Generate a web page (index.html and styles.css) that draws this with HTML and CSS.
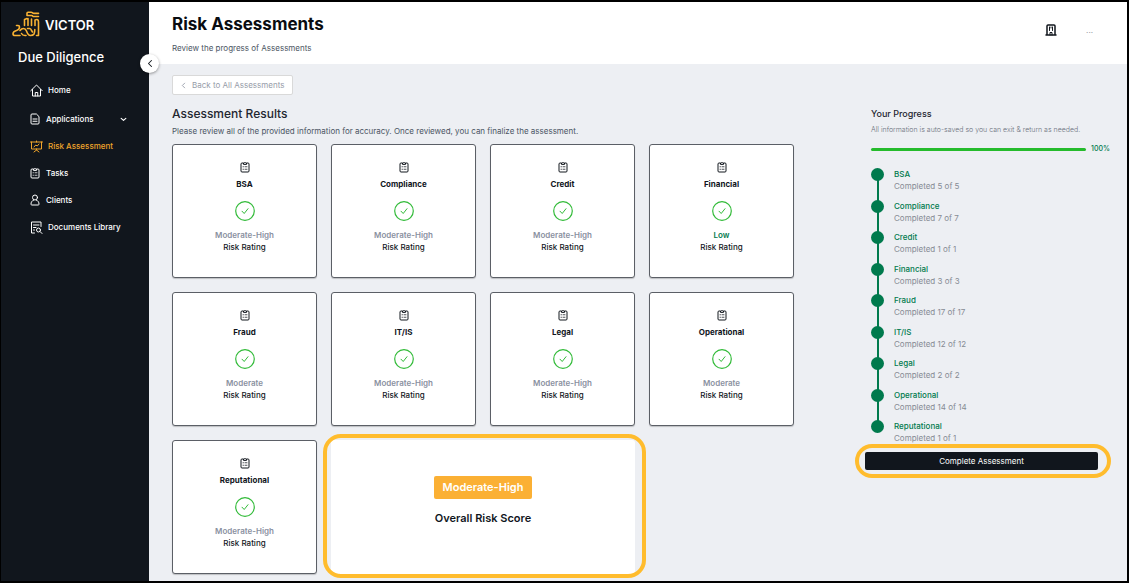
FILE: index.html
```html
<!DOCTYPE html>
<html lang="en">
<head>
<meta charset="utf-8">
<title>Risk Assessments</title>
<link rel="stylesheet" href="styles.css">
</head>
<body>
<svg class="sprite" aria-hidden="true">
  <symbol id="clipboard" viewBox="0 0 20 24"><path d="M6 4H4a2 2 0 0 0-2 2v14a2 2 0 0 0 2 2h12a2 2 0 0 0 2-2V6a2 2 0 0 0-2-2h-2"/><path d="M7 6V4h1.500a1.600 1.600 0 0 1 3 0H13v2z"/><path stroke-width="1.500" d="M6 11.500h1M10 11.500h4M6 16.500h1M10 16.500h4"/></symbol>
  <symbol id="check" viewBox="0 0 20 20"><circle cx="10" cy="10" r="9.300"/><path stroke-width="1" d="M7 10.200l2.200 2.300 3.800-4.800"/></symbol>
  <symbol id="left" viewBox="0 0 8 12"><path d="M6 2L2 6l4 4"/></symbol>
</svg>
<div class="app">
  <aside class="sidebar">
    <div class="brand">
      <svg class="brand-mark" viewBox="0 0 28 26" aria-hidden="true">
        <path d="M15 4.500V2.200q0-1 1-1h3q1 0 1.500.6t1.500.6h4.500M15 4.500h4.500q1 0 1.500 1h5.500M12.500 8.500v6M16 7.500v7M19.500 8v6.500M23 9v5.500M12.500 8.500L15 7.500M23 9q3.500-1.500 3.500 2v13.500h-2M4.500 14.500h1.500q1.500 0 1.500 1.500 0 2.500-3 3.500-3.500 1-3.500 3.200 0 1.800 2 1.800h5M8 19.500q1.500-2 3.500-2t3 2.500q1.500 4.500 4 4.500t3.500-1.500q.8-1.500.8-4.500M9.500 22.500q1 2 3.500 2h1M15.500 17.500h2q1.500 0 2 2l1 1.500"/>
      </svg>
      <span class="brand-name">VICTOR</span>
    </div>
    <h2 class="product">Due Diligence</h2>
    <nav class="nav">
      <a class="nav-item nav-home" href="#"><svg class="icon wide" viewBox="0 0 26 26"><path d="M1.500 13.500L13 2l11.500 11.500M5 11v13h16V11M10.500 24v-7h5v7"/></svg>Home</a>
      <a class="nav-item" href="#"><svg class="icon" viewBox="0 0 20 24"><path d="M12 2H4a2 2 0 0 0-2 2v16a2 2 0 0 0 2 2h12a2 2 0 0 0 2-2V8zM6 12h8M6 16.500h8"/></svg>Applications<svg class="caret" viewBox="0 0 12 8"><path d="M2 2l4 3.500L10 2"/></svg></a>
      <a class="nav-item active" href="#"><svg class="icon wide" viewBox="0 0 26 24"><path d="M1 3h24M3 3v14h20V3M13 1v2M13 17v2M8 23l5-4 5 4M8 13l3.500-4 3 2L18 7"/></svg>Risk Assessment</a>
      <a class="nav-item" href="#"><svg class="icon"><use href="#clipboard"/></svg>Tasks</a>
      <a class="nav-item" href="#"><svg class="icon" viewBox="0 0 20 24"><circle cx="10" cy="7" r="5"/><path d="M7 12.500c-3.500 1-5 4-5 8 0 1 .5 1.500 1.500 1.500h13c1 0 1.500-.5 1.500-1.500 0-4-1.500-7-5-8"/></svg>Clients</a>
      <a class="nav-item" href="#"><svg class="icon wide" viewBox="0 0 26 26"><path d="M9 24H3V2h19v9M7 8h11M7 13h5M7 18h2"/><circle cx="17" cy="18" r="4"/><path d="M20 21l4 4"/></svg>Documents Library</a>
    </nav>
    <button class="collapse" type="button" aria-label="Collapse menu"><svg class="collapse-icon"><use href="#left"/></svg></button>
  </aside>

  <div class="page">
    <header class="topbar">
      <div>
        <h1 class="title">Risk Assessments</h1>
        <p class="subtitle">Review the progress of Assessments</p>
      </div>
      <div class="tools">
        <button class="tool" type="button" aria-label="Organization"><svg class="building" viewBox="0 0 12 12"><path d="M2 11V2q0-1 1-1h6q1 0 1 1v9M1 11h10"/><path stroke-width="1" d="M4.500 3v3.500M7.500 3v3.500M6 3v1M5 11V8.500h2V11"/></svg></button>
        <button class="tool more" type="button" aria-label="More">...</button>
      </div>
    </header>

    <div class="content">
      <main class="results">
        <button class="back" type="button"><svg class="back-icon"><use href="#left"/></svg>Back to All Assessments</button>
        <h2 class="heading">Assessment Results</h2>
        <p class="lead">Please review all of the provided information for accuracy. Once reviewed, you can finalize the assessment.</p>
        <div class="cards">
          <section class="card"><svg class="card-icon"><use href="#clipboard"/></svg><h3 class="card-title">BSA</h3><svg class="card-check"><use href="#check"/></svg><p class="rating">Moderate-High</p><p class="caption">Risk Rating</p></section>
          <section class="card"><svg class="card-icon"><use href="#clipboard"/></svg><h3 class="card-title">Compliance</h3><svg class="card-check"><use href="#check"/></svg><p class="rating">Moderate-High</p><p class="caption">Risk Rating</p></section>
          <section class="card"><svg class="card-icon"><use href="#clipboard"/></svg><h3 class="card-title">Credit</h3><svg class="card-check"><use href="#check"/></svg><p class="rating">Moderate-High</p><p class="caption">Risk Rating</p></section>
          <section class="card"><svg class="card-icon"><use href="#clipboard"/></svg><h3 class="card-title">Financial</h3><svg class="card-check"><use href="#check"/></svg><p class="rating low">Low</p><p class="caption">Risk Rating</p></section>
          <section class="card"><svg class="card-icon"><use href="#clipboard"/></svg><h3 class="card-title">Fraud</h3><svg class="card-check"><use href="#check"/></svg><p class="rating">Moderate</p><p class="caption">Risk Rating</p></section>
          <section class="card"><svg class="card-icon"><use href="#clipboard"/></svg><h3 class="card-title">IT/IS</h3><svg class="card-check"><use href="#check"/></svg><p class="rating">Moderate-High</p><p class="caption">Risk Rating</p></section>
          <section class="card"><svg class="card-icon"><use href="#clipboard"/></svg><h3 class="card-title">Legal</h3><svg class="card-check"><use href="#check"/></svg><p class="rating">Moderate-High</p><p class="caption">Risk Rating</p></section>
          <section class="card"><svg class="card-icon"><use href="#clipboard"/></svg><h3 class="card-title">Operational</h3><svg class="card-check"><use href="#check"/></svg><p class="rating">Moderate</p><p class="caption">Risk Rating</p></section>
          <section class="card"><svg class="card-icon"><use href="#clipboard"/></svg><h3 class="card-title">Reputational</h3><svg class="card-check"><use href="#check"/></svg><p class="rating">Moderate-High</p><p class="caption">Risk Rating</p></section>
          <section class="overall"><p class="badge">Moderate-High</p><h3 class="overall-title">Overall Risk Score</h3></section>
        </div>
      </main>

      <aside class="progress">
        <h2 class="progress-title">Your Progress</h2>
        <p class="progress-note">All information is auto-saved so you can exit &amp; return as needed.</p>
        <div class="meter"><div class="track"></div><span class="percent">100%</span></div>
        <ol class="steps">
          <li class="step"><strong class="step-name">BSA</strong><span class="step-count">Completed 5 of 5</span></li>
          <li class="step"><strong class="step-name">Compliance</strong><span class="step-count">Completed 7 of 7</span></li>
          <li class="step"><strong class="step-name">Credit</strong><span class="step-count">Completed 1 of 1</span></li>
          <li class="step"><strong class="step-name">Financial</strong><span class="step-count">Completed 3 of 3</span></li>
          <li class="step"><strong class="step-name">Fraud</strong><span class="step-count">Completed 17 of 17</span></li>
          <li class="step"><strong class="step-name">IT/IS</strong><span class="step-count">Completed 12 of 12</span></li>
          <li class="step"><strong class="step-name">Legal</strong><span class="step-count">Completed 2 of 2</span></li>
          <li class="step"><strong class="step-name">Operational</strong><span class="step-count">Completed 14 of 14</span></li>
          <li class="step"><strong class="step-name">Reputational</strong><span class="step-count">Completed 1 of 1</span></li>
        </ol>
        <div class="finish"><button class="complete" type="button">Complete Assessment</button></div>
      </aside>
    </div>
  </div>
</div>
</body>
</html>
```
FILE: styles.css
```css
* { box-sizing: border-box; }
body, h1, h2, h3, p, ol { margin: 0; padding: 0; }
body { font-family: Inter, "Liberation Sans", sans-serif; font-size: 8px; line-height: 12px; color: #11161d; }
button { font: inherit; border: 0; padding: 0; cursor: pointer; }
svg { fill: none; stroke: currentColor; stroke-linecap: round; stroke-linejoin: round; flex: none; }
.sprite { position: absolute; width: 0; height: 0; }

.app { display: flex; min-height: 100vh; border: 2px solid #000; border-left-width: 1px; background: #edeff3; }

.sidebar { position: relative; flex: none; width: 148px; background: #11161d; color: #fff; }
.brand { display: flex; align-items: center; gap: 5px; padding: 9px 0 0 11px; }
.brand-mark { width: 28px; height: 26px; color: #f9b233; stroke-width: 1.6; }
.brand-name { padding-top: 2px; font-size: 13px; font-weight: 600; }
.product { padding: 12px 0 0 17px; font-size: 13px; line-height: 16px; font-weight: 500; }
.nav { display: flex; flex-direction: column; gap: 11px; padding: 17px 0 0 29px; }
.nav-item { display: flex; align-items: center; gap: 6px; height: 16px; color: #fff; font-weight: 500; text-decoration: none; }
.nav-home { margin-bottom: 2px; }
.active { color: #f0a52b; }
.icon { width: 10px; height: 12px; stroke-width: 2; }
.wide { width: 13px; height: 13px; margin-right: -1px; }
.caret { width: 7px; height: 5px; margin: 0 22px 0 auto; stroke-width: 2; }
.collapse { position: absolute; top: 52px; right: -10px; width: 19px; height: 19px; display: grid; place-items: center; border-radius: 50%; background: #fff; color: #11161d; box-shadow: 0 1px 3px rgba(0, 0, 0, .4); }
.collapse-icon { width: 6px; height: 9px; stroke-width: 1.4; }

.page { flex: 1; min-width: 0; }
.topbar { display: flex; justify-content: space-between; padding: 11px 34px 10px 23px; background: #fff; }
.title { font-size: 17px; line-height: 22px; font-weight: 700; color: #090c11; }
.subtitle { margin-top: 7px; color: #4b5563; }
.tools { display: flex; align-items: flex-start; gap: 29px; padding-top: 11px; }
.tool { background: none; color: #11161d; }
.building { display: block; width: 12px; height: 12px; stroke-width: 1.5; }
.more { color: #8b9099; }

.content { display: flex; gap: 71px; padding: 11px 0 7px 23px; }
.results { flex: 1; min-width: 0; }
.back { display: flex; align-items: center; gap: 6px; height: 20px; padding: 0 8px; border: 1px solid #d9d9d9; border-radius: 2px; background: #fff; color: #969ca8; }
.back-icon { width: 5px; height: 7px; stroke-width: 1.5; }
.heading { margin-top: 11px; font-size: 12px; line-height: 16px; font-weight: 500; color: #1f2630; }
.lead { margin-top: 3px; color: #4b5563; }
.cards { display: grid; grid-template-columns: repeat(4, 1fr); gap: 14px; margin-top: 7px; }
.card { display: flex; flex-direction: column; align-items: center; min-height: 134px; padding: 16px 4px; border: 1px solid #5b5f66; border-radius: 3px; background: #fff; box-shadow: 0 1px 1px rgba(0, 0, 0, .2); }
.card-icon { width: 10px; height: 12px; stroke-width: 2; }
.card-title { margin-top: 5px; font-size: 8px; font-weight: 700; }
.card-check { width: 20px; height: 20px; margin: 11px 0 8px; color: #32bb39; stroke-width: 1.2; }
.rating { font-weight: 600; color: #8a919f; }
.low { color: #007a4d; }
.caption { font-weight: 500; }
.overall { position: relative; grid-column: span 2; display: flex; flex-direction: column; align-items: center; padding-top: 36px; border-radius: 3px; background: #fff; }
.overall::after, .finish::after { content: ""; position: absolute; border: 4px solid #ffbc2d; pointer-events: none; }
.overall::after { inset: -6px -11px -4px -8px; border-radius: 18px; }
.badge { padding: 3px 9px; border-radius: 2px; background: #fbb034; color: #fff; font-size: 11px; line-height: 17px; font-weight: 600; }
.overall-title { margin-top: 11px; font-size: 11px; line-height: 16px; font-weight: 600; }

.progress { flex: none; width: 262px; padding: 33px 17px 0 6px; }
.progress-title { font-size: 9px; font-weight: 500; color: #1f2630; }
.progress-note { margin-top: 4px; font-size: 7px; font-weight: 300; color: #6c727d; }
.meter { display: flex; align-items: center; gap: 5px; margin-top: 7px; }
.track { flex: 1; height: 3px; border-radius: 2px; background: #25bb2c; }
.percent { font-size: 7px; font-weight: 500; color: #007a4d; }
.steps { display: grid; grid-auto-rows: 1fr; min-height: 284px; margin-top: 13px; list-style: none; }
.step { position: relative; display: flex; flex-direction: column; padding-left: 23px; }
.step::before { content: ""; position: absolute; top: 0; left: 0; width: 13px; height: 13px; border-radius: 50%; background: #007a4d; }
.step:not(:last-child)::after { content: ""; position: absolute; top: 6px; bottom: -6px; left: 6px; width: 2px; background: #007a4d; }
.step-name { font-weight: 500; color: #007a4d; }
.step-count { color: #868b93; }
.finish { position: relative; margin: 0 12px 0 -6px; }
.finish::after { inset: -8px -13px -8px -10px; border-radius: 17px; }
.complete { display: block; width: 100%; height: 18px; border-radius: 2px; background: #11161d; color: #fff; }
```
